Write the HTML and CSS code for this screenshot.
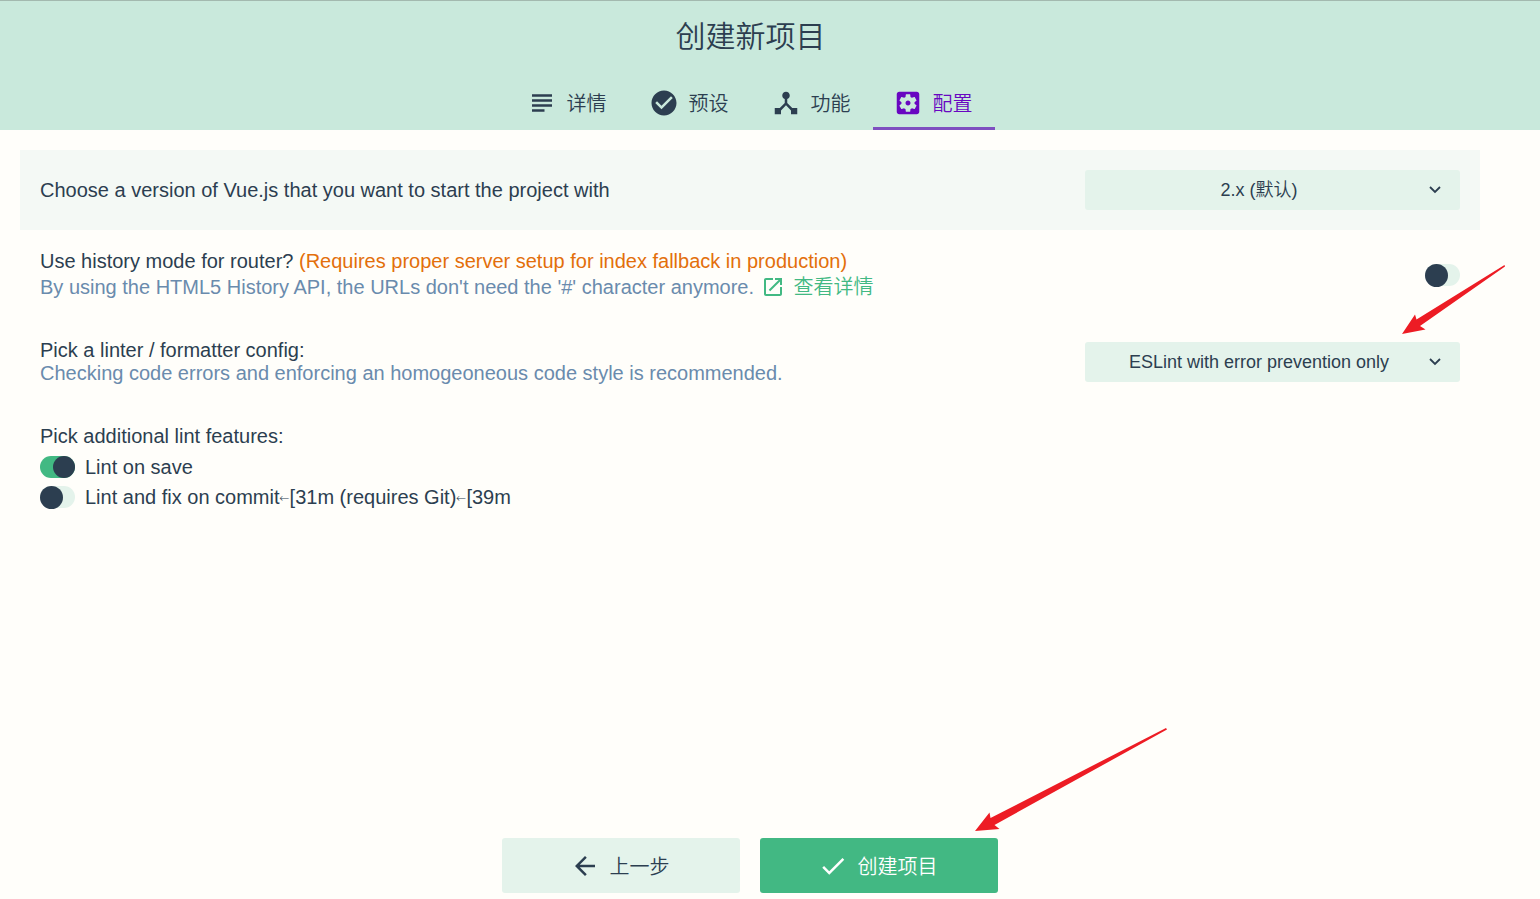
FILE: index.html
```html
<!DOCTYPE html>
<html lang="zh-CN">
<head>
<meta charset="utf-8">
<title>创建新项目</title>
<link rel="stylesheet" href="styles.css">
</head>
<body>
<header class="header">
  <h1 class="title">创建新项目</h1>
  <nav class="tabs">
    <button class="tab" type="button"><svg class="tab-icon" viewBox="0 0 24 24"><path d="M14 17H4v2h10v-2zm6-8H4v2h16V9zM4 15h16v-2H4v2zM4 5v2h16V5H4z"/></svg><span>详情</span></button>
    <button class="tab" type="button"><svg class="tab-icon" viewBox="0 0 24 24"><path d="M12 2C6.48 2 2 6.48 2 12s4.48 10 10 10 10-4.48 10-10S17.52 2 12 2zm-2 15l-5-5 1.41-1.41L10 14.17l7.59-7.59L19 8l-9 9z"/></svg><span>预设</span></button>
    <button class="tab" type="button"><svg class="tab-icon" viewBox="0 0 24 24"><path d="M17 16l-4-4V8.82C14.16 8.4 15 7.3 15 6c0-1.66-1.34-3-3-3S9 4.34 9 6c0 1.3.84 2.4 2 2.82V12l-4 4H3v5h5v-3.05l4-4.2 4 4.2V21h5v-5h-4z"/></svg><span>功能</span></button>
    <button class="tab tab-active" type="button"><svg class="tab-icon" viewBox="0 0 24 24"><path d="M12 10c-1.1 0-2 .9-2 2s.9 2 2 2 2-.9 2-2-.9-2-2-2zm7-7H5c-1.11 0-2 .9-2 2v14c0 1.1.89 2 2 2h14c1.11 0 2-.9 2-2V5c0-1.1-.89-2-2-2zm-1.75 9c0 .23-.02.46-.05.68l1.48 1.16c.13.11.17.3.08.45l-1.4 2.42c-.09.15-.27.21-.43.15l-1.74-.7c-.36.28-.76.51-1.18.69l-.26 1.85c-.03.17-.18.3-.35.3h-2.8c-.17 0-.32-.13-.35-.29l-.26-1.85c-.43-.18-.82-.41-1.18-.69l-1.74.7c-.16.06-.34 0-.43-.15l-1.4-2.42c-.09-.15-.05-.34.08-.45l1.48-1.16c-.03-.23-.05-.46-.05-.69s.02-.46.05-.68l-1.48-1.16c-.13-.11-.17-.3-.08-.45l1.4-2.42c.09-.15.27-.21.43-.15l1.74.7c.36-.28.76-.51 1.18-.69l.26-1.85c.03-.17.18-.3.35-.3h2.8c.17 0 .32.13.35.29l.26 1.85c.43.18.82.41 1.18.69l1.74-.7c.16-.06.34 0 .43.15l1.4 2.42c.09.15.05.34-.08.45l-1.48 1.16c.03.23.05.46.05.69z"/></svg><span>配置</span></button>
  </nav>
</header>
<main class="prompts">
  <section class="row row-tinted">
    <label class="text" for="version">Choose a version of Vue.js that you want to start the project with</label>
    <div class="select-wrap">
      <select class="select" id="version"><option>2.x (默认)</option></select>
      <svg class="chevron" viewBox="0 0 14 14"><path d="M2 5l5 5 5-5"/></svg>
    </div>
  </section>
  <section class="row">
    <div class="text">
      <label for="history">Use history mode for router? <span class="warning">(Requires proper server setup for index fallback in production)</span></label>
      <div class="description with-link">By using the HTML5 History API, the URLs don't need the '#' character anymore.
        <a class="link" href="#"><svg class="link-icon" viewBox="0 0 24 24"><path d="M19 19H5V5h7V3H5c-1.11 0-2 .9-2 2v14c0 1.1.89 2 2 2h14c1.1 0 2-.9 2-2v-7h-2v7zM14 3v2h3.59l-9.83 9.83 1.41 1.41L19 6.41V10h2V3h-7z"/></svg>查看详情</a>
      </div>
    </div>
    <input class="switch" type="checkbox" id="history">
  </section>
  <section class="row">
    <div class="text">
      <label for="linter">Pick a linter / formatter config:</label>
      <div class="description">Checking code errors and enforcing an homogeoneous code style is recommended.</div>
    </div>
    <div class="select-wrap">
      <select class="select" id="linter"><option>ESLint with error prevention only</option></select>
      <svg class="chevron" viewBox="0 0 14 14"><path d="M2 5l5 5 5-5"/></svg>
      <svg class="arrow arrow-select" viewBox="1402 264 104 71"><path d="M1402 334L1415 314.5L1416.5 319.5L1504.5 265L1505 266.5L1420 326L1425.5 329.5Z"/></svg>
    </div>
  </section>
  <section class="row">
    <fieldset class="features">
      <legend class="legend">Pick additional lint features:</legend>
      <label class="feature"><input class="switch" type="checkbox" checked>Lint on save</label>
      <label class="feature"><input class="switch" type="checkbox"><span>Lint and fix on commit<span class="escape">←</span>[31m (requires Git)<span class="escape">←</span>[39m</span></label>
    </fieldset>
  </section>
</main>
<footer class="actions">
  <button class="button" type="button"><svg class="button-icon" viewBox="0 0 24 24"><path d="M20 11H7.83l5.59-5.59L12 4l-8 8 8 8 1.41-1.41L7.83 13H20v-2z"/></svg>上一步</button>
  <div class="primary-wrap">
    <button class="button button-primary" type="button"><svg class="button-icon" viewBox="0 0 24 24"><path d="M9 16.17L4.83 12l-1.42 1.41L9 19 21 7l-1.41-1.41z"/></svg>创建项目</button>
    <svg class="arrow arrow-create" viewBox="975 727 193 105"><path d="M975 831L989.5 812.5L990.5 818L1166 728L1167 729.5L994.5 825L999.5 829Z"/></svg>
  </div>
</footer>
</body>
</html>
```
FILE: styles.css
```css
* {
  box-sizing: border-box;
}

body {
  margin: 0;
  min-height: 100vh;
  display: flex;
  flex-direction: column;
  background: #fffefa;
  color: #2c3e50;
  font: 350 20px/23px "Liberation Sans", Arial, "Noto Sans CJK SC", sans-serif;
}

button,
select,
input {
  margin: 0;
  font: inherit;
  color: inherit;
  border: 0;
}

.header {
  height: 130px;
  padding-right: 39px;
  border-top: 1px solid #a3b9af;
  background: #c9e9dc;
  display: flex;
  flex-direction: column;
  justify-content: space-between;
}

.title {
  margin: 16px 0 0;
  font-size: 30px;
  line-height: 40px;
  font-weight: 350;
  text-align: center;
}

.tabs {
  display: flex;
  justify-content: center;
}

.tab {
  height: 54px;
  padding: 2px 22px 0 20px;
  border-bottom: 3px solid transparent;
  background: none;
  font-family: "Noto Sans CJK SC", sans-serif;
  display: flex;
  align-items: center;
  gap: 10px;
}

.tab-active {
  color: #6806c1;
  border-bottom-color: #7e4fc0;
}

.tab-icon {
  width: 30px;
  height: 30px;
  fill: currentColor;
}

.prompts {
  flex: 1;
  padding: 20px 60px 20px 20px;
}

.row {
  padding: 20px;
  display: flex;
  align-items: center;
  justify-content: space-between;
}

.row-tinted {
  background: #f4f9f5;
}

.warning {
  color: #e36f0b;
}

.description {
  color: #6a8bad;
}

.with-link {
  padding-top: 1px;
  line-height: 24px;
}

.link {
  margin-left: 1px;
  color: #42b983;
  font-family: "Noto Sans CJK SC", sans-serif;
  text-decoration: none;
}

.link-icon {
  width: 24px;
  height: 24px;
  margin-right: 9px;
  vertical-align: -5px;
  fill: currentColor;
}

.select-wrap {
  position: relative;
  width: 375px;
  display: grid;
}

.select {
  height: 40px;
  padding: 0 27px 0 0;
  appearance: none;
  border-radius: 3px;
  background: #e4f3eb;
  font-size: 18px;
  text-align-last: center;
}

.chevron {
  position: absolute;
  right: 18px;
  top: 12px;
  width: 14px;
  height: 14px;
  fill: none;
  stroke: currentColor;
  stroke-width: 1.8;
  pointer-events: none;
}

.switch {
  position: relative;
  flex: none;
  width: 35px;
  height: 22px;
  appearance: none;
  border-radius: 12px;
  background: #e4f3eb;
}

.switch::before {
  content: "";
  position: absolute;
  left: 0;
  top: 0;
  width: 23px;
  height: 23px;
  border-radius: 50%;
  background: #2c3e50;
}

.switch:checked {
  background: #42b983;
}

.switch:checked::before {
  left: 13px;
  width: 22px;
  height: 22px;
}

.features {
  margin: 0;
  padding: 0;
  border: 0;
}

.legend {
  padding: 0 0 4px;
}

.feature {
  height: 30px;
  display: flex;
  align-items: center;
  gap: 10px;
}

.escape {
  font-family: "DejaVu Sans", sans-serif;
  font-size: 12px;
  line-height: 12px;
  vertical-align: 2px;
}

.actions {
  padding: 0 40px 6px 0;
  display: flex;
  justify-content: center;
  gap: 20px;
}

.primary-wrap {
  position: relative;
}

.button {
  width: 238px;
  height: 55px;
  padding: 0 3px 0 0;
  border-radius: 3px;
  background: #e4f3eb;
  font-family: "Noto Sans CJK SC", sans-serif;
  display: flex;
  align-items: center;
  justify-content: center;
  gap: 10px;
}

.button-primary {
  background: #42b883;
  color: #fff;
}

.button-icon {
  width: 30px;
  height: 30px;
  fill: currentColor;
}

.arrow {
  position: absolute;
  fill: #ed1c24;
  pointer-events: none;
}

.arrow-select {
  right: -46px;
  bottom: 47px;
  width: 104px;
  height: 71px;
}

.arrow-create {
  left: 215px;
  bottom: 61px;
  width: 193px;
  height: 105px;
}
```
